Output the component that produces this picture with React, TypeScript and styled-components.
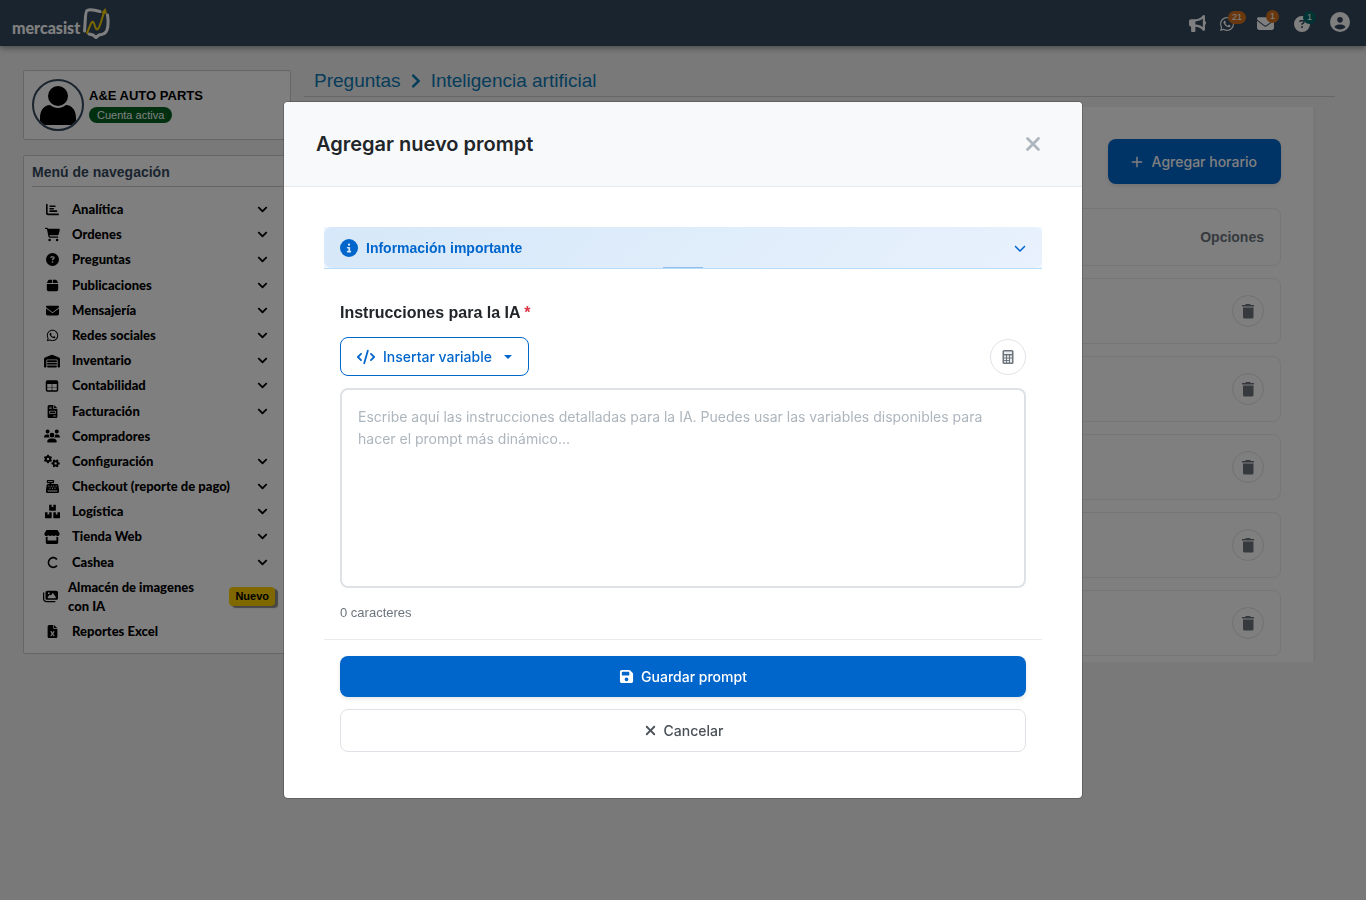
import React, { useState } from 'react';
import styled, { createGlobalStyle } from 'styled-components';
import {
  FaBullhorn, FaWhatsapp, FaEnvelope, FaCircleQuestion, FaCircleUser, FaChartBar, FaCartShopping,
  FaBox, FaWarehouse, FaFileInvoice, FaUsers, FaGears, FaCashRegister, FaStore,
  FaC, FaImages, FaFileExcel, FaChevronDown, FaCircleInfo, FaCode, FaXmark, FaFloppyDisk,
} from 'react-icons/fa6';
import { FaBoxes, FaChevronDown as FaMenuChevron, FaChevronRight } from 'react-icons/fa';
import { BiPlus } from 'react-icons/bi';

const sans = '"Liberation Sans", Arial, sans-serif';
const inter = 'Inter, "Liberation Sans", sans-serif';

const Global = createGlobalStyle`
  *, *::before, *::after { box-sizing: border-box; }
  body { margin: 0; background: #f2f2f2; font-family: ${sans}; color: #000; }
  svg { display: block; flex: none; }
  h1, h2, p, ul, ol { margin: 0; padding: 0; }
  ul, ol { list-style: none; }
  a { color: inherit; text-decoration: none; }
  button { font: inherit; cursor: pointer; }
`;

const TopBar = styled.header`
  display: flex;
  align-items: center;
  justify-content: space-between;
  height: 46px;
  padding: 0 16px 0 12px;
  background: #34495e;
  box-shadow: 0 2px 6px rgba(0, 0, 0, 0.4);
`;

const Brand = styled.a`
  display: flex;
  align-items: flex-end;
  gap: 2px;
  color: #fff;
  font: 900 16px/22px Lato, sans-serif;
`;

const BarLinks = styled.nav`
  display: flex;
  align-items: flex-end;
  gap: 20px;
  padding-bottom: 2px;
`;

const BarPair = styled.div`
  display: flex;
  align-items: flex-end;
  gap: 13px;
  padding-right: 2px;
`;

const BarLink = styled.a`
  position: relative;
  display: block;
  color: #fff;
`;

const Count = styled.span<{ $color: string }>`
  position: absolute;
  left: 9px;
  top: -5px;
  padding: 0 4px;
  border-radius: 8px;
  background: ${(p) => p.$color};
  font-size: 9px;
  line-height: 13px;
`;

const Page = styled.div`
  display: flex;
  align-items: flex-start;
  gap: 13px;
  padding: 24px 31px 24px 23px;
`;

const Sidebar = styled.aside`
  flex: 0 0 268px;
  display: flex;
  flex-direction: column;
  gap: 15px;
`;

const Card = styled.section`
  padding: 8px;
  border: 1px solid #ccc;
  border-radius: 2px;
  background: #fff;
`;

const Profile = styled(Card)`
  display: flex;
  align-items: center;
  gap: 5px;
`;

const Avatar = styled.span`
  width: 52px;
  height: 52px;
  border: 2px solid #34495e;
  border-radius: 50%;
  overflow: hidden;
`;

const Company = styled.p`
  font-size: 13px;
  font-weight: 700;
  line-height: 18px;
  margin-bottom: 2px;
`;

const Status = styled.span`
  display: block;
  width: fit-content;
  padding: 0 8px;
  border-radius: 8px;
  background: #00601f;
  color: #fff;
  font-size: 11px;
  line-height: 16px;
`;

const MenuTitle = styled.h2`
  margin-right: -1px;
  padding-bottom: 6px;
  border-bottom: 1px solid #ccc;
  color: #34495e;
  font-size: 14px;
  line-height: 16px;
`;

const Menu = styled.ul`
  display: flex;
  flex-direction: column;
  justify-content: space-between;
  min-height: 458px;
  padding-top: 10px;
  padding-bottom: 1px;
`;

const MenuLink = styled.a<{ $tall?: boolean }>`
  display: flex;
  align-items: center;
  gap: ${(p) => (p.$tall ? 9 : 11)}px;
  padding: ${(p) => (p.$tall ? '3px 7px 3px 9px' : '0 14px 0 11px')};
  font: 900 13px Lato, sans-serif;
  line-height: ${(p) => (p.$tall ? 19 : 25)}px;
`;

const MenuIcon = styled.span`
  width: 18px;
  display: flex;
  justify-content: center;
`;

const MenuText = styled.span`
  flex: 1;
`;

const NewTag = styled.span`
  margin-left: 16px;
  padding: 0 6px;
  border-radius: 4px;
  background: #ffd000;
  box-shadow: 3px 2px 1px rgba(0, 0, 0, 0.45);
  font: 700 11px/19px ${sans};
`;

const Main = styled.main`
  flex: 1;
  min-width: 0;
`;

const Crumbs = styled.nav`
  display: flex;
  align-items: center;
  gap: 7px;
  padding: 0 10px 4px;
  margin-bottom: 10px;
  border-bottom: 1px solid #ccc;
  color: #0d7ab5;
  font-size: 19px;
  line-height: 22px;
`;

const Panel = styled.section`
  margin-right: 22px;
  padding: 32px 32px 6px;
  background: #fff;
  box-shadow: 3px 0 0 #eee;
`;

const Toolbar = styled.div`
  display: flex;
  justify-content: flex-end;
  margin-bottom: 24px;
`;

const PrimaryButton = styled.button<{ $size: 'large' | 'wide' }>`
  display: flex;
  align-items: center;
  justify-content: center;
  gap: ${(p) => (p.$size === 'large' ? 6 : 7)}px;
  width: ${(p) => (p.$size === 'wide' ? '100%' : 'auto')};
  height: ${(p) => (p.$size === 'wide' ? 41 : 45)}px;
  padding: ${(p) => (p.$size === 'wide' ? '0 24px' : '0 24px 0 20px')};
  border: 0;
  border-radius: 8px;
  background: #0066cc;
  box-shadow: 0 2px 4px rgba(0, 0, 0, 0.1);
  color: #fff;
  font: 500 14px/20px ${inter};
`;

const Prompts = styled.ul`
  display: flex;
  flex-direction: column;
  gap: 12px;
`;

const PromptRow = styled.li<{ $head?: boolean }>`
  display: flex;
  align-items: center;
  justify-content: flex-end;
  height: ${(p) => (p.$head ? 58 : 66)}px;
  padding: 0 16px;
  border: 1px solid #e9ecef;
  border-radius: 8px;
  color: #6c757d;
  font-size: 14px;
  font-weight: 700;
`;

const RoundButton = styled.button<{ $size: number }>`
  display: flex;
  align-items: center;
  justify-content: center;
  width: ${(p) => p.$size}px;
  height: ${(p) => p.$size}px;
  padding: 0;
  border: 1px solid #dee2e6;
  border-radius: 50%;
  background: #fff;
  color: #6c757d;
`;

const Overlay = styled.div`
  position: fixed;
  inset: 0;
  display: flex;
  align-items: center;
  justify-content: center;
  background: rgba(0, 0, 0, 0.5);
`;

const Dialog = styled.div`
  width: 100%;
  max-width: 800px;
  border: 1px solid rgba(0, 0, 0, 0.2);
  border-radius: 5px;
  background: #fff;
  background-clip: padding-box;
  overflow: hidden;
`;

const DialogHead = styled.div`
  display: flex;
  align-items: center;
  justify-content: space-between;
  height: 85px;
  padding: 0 38px 0 32px;
  border-bottom: 1px solid #e5e9ee;
  background: #f8f9fb;
`;

const DialogTitle = styled.h1`
  color: #212529;
  font: 600 20px/28px ${inter};
`;

const CloseButton = styled.button`
  padding: 0;
  border: 0;
  background: none;
  color: #adb5bd;
`;

const DialogBody = styled.div`
  padding: 40px 40px 46px;
`;

const Notice = styled.div`
  position: relative;
  border-bottom: 1px solid #b8dcfb;
  background: #eef6ff;
`;

const NoticeToggle = styled.button`
  display: flex;
  align-items: center;
  gap: 8px;
  width: 100%;
  height: 41px;
  padding: 0 16px;
  border: 0;
  border-radius: 8px;
  background: linear-gradient(135deg, #d6e8f9, #e8f1fc);
  color: #0066cc;
  font-size: 14px;
  font-weight: 700;
  text-align: left;
`;

const NoticeText = styled.span`
  flex: 1;
`;

const NoticeHandle = styled.span`
  position: absolute;
  left: 50%;
  bottom: 0;
  width: 40px;
  height: 1px;
  margin-left: -20px;
  background: #8fbfea;
`;

const Form = styled.form`
  padding-top: 32px;
`;

const Fields = styled.div`
  display: flex;
  flex-direction: column;
  padding: 0 16px 16px;
`;

const FieldLabel = styled.label`
  margin-bottom: 13px;
  color: #212529;
  font-size: 16px;
  font-weight: 700;
  line-height: 23px;
`;

const Required = styled.span`
  color: #dc3545;
`;

const FieldTools = styled.div`
  display: flex;
  align-items: center;
  justify-content: space-between;
  margin-bottom: 12px;
`;

const VariableButton = styled.button`
  display: flex;
  align-items: center;
  gap: 8px;
  height: 39px;
  padding: 0 16px;
  border: 1px solid #0066cc;
  border-radius: 8px;
  background: #fff;
  color: #0066cc;
  font: 500 14px/20px ${inter};
`;

const Caret = styled.svg`
  margin-left: 4px;
`;

const PromptInput = styled.textarea`
  width: 100%;
  height: 200px;
  margin-bottom: 14px;
  padding: 16px;
  border: 2px solid #dee2e6;
  border-radius: 8px;
  color: #212529;
  font: 400 14px/22px ${inter};
  resize: none;
  outline: none;
  &::placeholder { color: #adb5bd; opacity: 1; }
`;

const Counter = styled.p`
  color: #6c757d;
  font-size: 13px;
  line-height: 21px;
`;

const Actions = styled.div`
  display: flex;
  flex-direction: column;
  gap: 12px;
  padding: 16px 16px 0;
  border-top: 1px solid #e9ecef;
`;

const CancelButton = styled.button`
  display: flex;
  align-items: center;
  justify-content: center;
  gap: 6px;
  height: 43px;
  border: 1px solid #dee2e6;
  border-radius: 8px;
  background: #fff;
  color: #495057;
  font: 500 14px/20px ${inter};
`;

type IconProps = { size?: number };

const TableIcon = ({ size = 14 }: IconProps) => (
  <svg width={size} height={size} viewBox="0 0 14 14" fill="none" aria-hidden="true">
    <rect x="1.500" y="2" width="11" height="10" rx="1" stroke="currentColor" strokeWidth="1.500" />
    <path d="M1 2H13V5H1Z" fill="currentColor" />
    <path d="M7 5V12" stroke="currentColor" strokeWidth="1" opacity="0.600" />
    <path d="M2 8.500H12" stroke="currentColor" strokeWidth="1" opacity="0.350" />
  </svg>
);

const TrashIcon = () => (
  <svg width="14" height="16" viewBox="0 0 14 16" fill="currentColor" aria-hidden="true">
    <path d="M1 2H4L5 1H9L10 2H13V3.600H1Z" />
    <path d="M2 4.600H12.500V14Q12.500 15.500 11 15.500H3.500Q2 15.500 2 14Z" />
  </svg>
);

const CalculatorIcon = () => (
  <svg width="12" height="14" viewBox="0 0 12 14" aria-hidden="true">
    <rect x="0.500" width="11" height="14" rx="1.500" fill="currentColor" />
    <path d="M2 1.500H10V4H2ZM2 5.500H4V7.500H2ZM5 5.500H7V7.500H5ZM8 5.500H10V7.500H8ZM2 8.500H4V10H2ZM5 8.500H7V10H5ZM2 11H4V12.500H2ZM5 11H7V12.500H5ZM8 8.500H10V12.500H8Z" fill="#fff" fillOpacity="0.850" />
  </svg>
);

const menu: { label: string; icon: React.ComponentType<IconProps>; size?: number; leaf?: boolean; isNew?: boolean }[] = [
  { label: 'Analítica', icon: FaChartBar },
  { label: 'Ordenes', icon: FaCartShopping, size: 15 },
  { label: 'Preguntas', icon: FaCircleQuestion },
  { label: 'Publicaciones', icon: FaBox },
  { label: 'Mensajería', icon: FaEnvelope },
  { label: 'Redes sociales', icon: FaWhatsapp },
  { label: 'Inventario', icon: FaWarehouse, size: 16 },
  { label: 'Contabilidad', icon: TableIcon, size: 14 },
  { label: 'Facturación', icon: FaFileInvoice },
  { label: 'Compradores', icon: FaUsers, size: 16, leaf: true },
  { label: 'Configuración', icon: FaGears, size: 16 },
  { label: 'Checkout (reporte de pago)', icon: FaCashRegister },
  { label: 'Logística', icon: FaBoxes, size: 15 },
  { label: 'Tienda Web', icon: FaStore, size: 16 },
  { label: 'Cashea', icon: FaC },
  { label: 'Almacén de imagenes con IA', icon: FaImages, size: 15, leaf: true, isNew: true },
  { label: 'Reportes Excel', icon: FaFileExcel, leaf: true },
];

const LogoMark = () => (
  <svg width="28" height="32" viewBox="0 0 28 32" fill="none" aria-hidden="true">
    <path d="M18 4.500C13 3 8 2 5 3.500C3 5 3.500 14 2.500 24" stroke="#fff" strokeWidth="3" strokeLinecap="round" />
    <path d="M7 27L11 28L14 30.500L17 28C22 27.500 24 26 25 23C27 17 26 12 25.500 8" stroke="#fff" strokeWidth="3" strokeLinecap="round" strokeLinejoin="round" />
    <path d="M5 26C8 20 9 14 11 15C13 16 13 24 16 22C19 18 20 9 23 4" stroke="#f5cf00" strokeWidth="2" strokeLinecap="round" />
    <path d="M19 6L23.500 1L25 7Z" fill="#f5cf00" />
  </svg>
);

const Person = () => (
  <svg width="48" height="48" viewBox="0 0 48 48" aria-hidden="true">
    <circle cx="24" cy="15" r="10" />
    <path d="M6 44V37C6 29 10 24.500 16 24C21 28 27 28 32 24C38 24.500 42 29 42 37V44Z" />
  </svg>
);

export default function App() {
  const [text, setText] = useState('');
  return (
    <>
      <Global />
      <TopBar>
        <Brand href="#">mercasist<LogoMark /></Brand>
        <BarLinks>
          <BarPair>
            <BarLink href="#" aria-label="Novedades"><FaBullhorn size={17} /></BarLink>
            <BarLink href="#" aria-label="WhatsApp"><FaWhatsapp size={16} /><Count $color="#d2701e">21</Count></BarLink>
          </BarPair>
          <BarLink href="#" aria-label="Mensajes"><FaEnvelope size={17} /><Count $color="#d2701e">1</Count></BarLink>
          <BarLink href="#" aria-label="Preguntas"><FaCircleQuestion size={16} /><Count $color="#006666">1</Count></BarLink>
          <BarLink href="#" aria-label="Mi cuenta"><FaCircleUser size={20} /></BarLink>
        </BarLinks>
      </TopBar>
      <Page>
        <Sidebar>
          <Profile>
            <Avatar><Person /></Avatar>
            <div>
              <Company>A&amp;E AUTO PARTS</Company>
              <Status>Cuenta activa</Status>
            </div>
          </Profile>
          <Card>
            <MenuTitle>Menú de navegación</MenuTitle>
            <Menu>
              {menu.map(({ label, icon: Icon, size = 13, leaf, isNew }) => (
                <li key={label}>
                  <MenuLink href="#" $tall={isNew}>
                    <MenuIcon><Icon size={size} /></MenuIcon>
                    <MenuText>{label}</MenuText>
                    {!leaf && <FaMenuChevron size={11} />}
                    {isNew && <NewTag>Nuevo</NewTag>}
                  </MenuLink>
                </li>
              ))}
            </Menu>
          </Card>
        </Sidebar>
        <Main>
          <Crumbs aria-label="Ruta">
            <a href="#">Preguntas</a>
            <FaChevronRight size={16} />
            <a href="#">Inteligencia artificial</a>
          </Crumbs>
          <Panel>
            <Toolbar>
              <PrimaryButton type="button" $size="large"><BiPlus size={18} />Agregar horario</PrimaryButton>
            </Toolbar>
            <Prompts>
              <PromptRow $head>Opciones</PromptRow>
              {[1, 2, 3, 4, 5].map((n) => (
                <PromptRow key={n}>
                  <RoundButton type="button" $size={32} aria-label="Eliminar"><TrashIcon /></RoundButton>
                </PromptRow>
              ))}
            </Prompts>
          </Panel>
        </Main>
      </Page>
      <Overlay>
        <Dialog role="dialog" aria-modal="true" aria-labelledby="dialog-title">
          <DialogHead>
            <DialogTitle id="dialog-title">Agregar nuevo prompt</DialogTitle>
            <CloseButton type="button" aria-label="Cerrar"><FaXmark size={22} /></CloseButton>
          </DialogHead>
          <DialogBody>
            <Notice>
              <NoticeToggle type="button" aria-expanded="false">
                <FaCircleInfo size={18} />
                <NoticeText>Información importante</NoticeText>
                <FaChevronDown size={12} />
              </NoticeToggle>
              <NoticeHandle />
            </Notice>
            <Form onSubmit={(e) => e.preventDefault()}>
              <Fields>
                <FieldLabel htmlFor="prompt">Instrucciones para la IA <Required>*</Required></FieldLabel>
                <FieldTools>
                  <VariableButton type="button">
                    <FaCode size={18} />Insertar variable
                    <Caret width="8" height="4" viewBox="0 0 8 4" aria-hidden="true"><path d="M0 0H8L4 4Z" fill="currentColor" /></Caret>
                  </VariableButton>
                  <RoundButton type="button" $size={36} aria-label="Calculadora"><CalculatorIcon /></RoundButton>
                </FieldTools>
                <PromptInput
                  id="prompt"
                  value={text}
                  onChange={(e) => setText(e.target.value)}
                  placeholder="Escribe aquí las instrucciones detalladas para la IA. Puedes usar las variables disponibles para hacer el prompt más dinámico..."
                />
                <Counter>{text.length} caracteres</Counter>
              </Fields>
              <Actions>
                <PrimaryButton type="submit" $size="wide"><FaFloppyDisk size={15} />Guardar prompt</PrimaryButton>
                <CancelButton type="button"><FaXmark size={15} />Cancelar</CancelButton>
              </Actions>
            </Form>
          </DialogBody>
        </Dialog>
      </Overlay>
    </>
  );
}
